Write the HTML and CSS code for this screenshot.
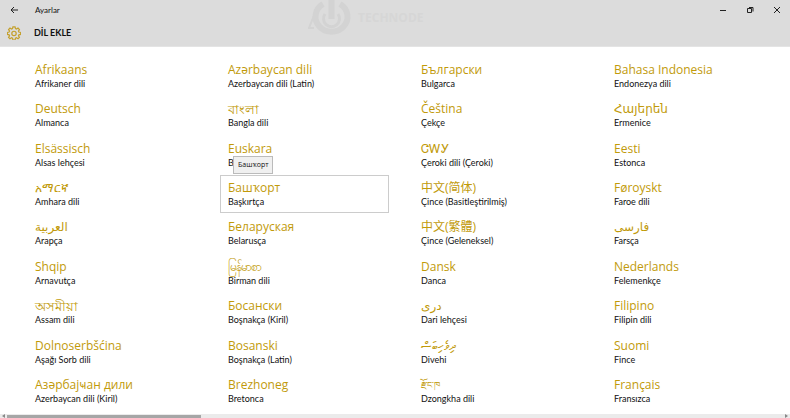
FILE: index.html
```html
<!DOCTYPE html>
<html lang="tr">
<head>
  <meta charset="UTF-8" />
  <meta name="viewport" content="width=device-width, initial-scale=1.0"/>
  <title>Ayarlar</title>
  <link rel="stylesheet" href="styles.css">
</head>
<body>
  <header class="header">
    <div class="titlebar">
      <button class="back" aria-label="Geri">
        <svg width="8" height="8" viewBox="0 0 8 8"><path d="M8 4H1M4 1L1 4l3 3"/></svg>
      </button>
      <span class="app-name">Ayarlar</span>
      <div class="window-buttons">
        <button aria-label="Simge durumuna küçült">
          <svg width="8" height="8" viewBox="0 0 8 8"><path d="M1 4.5h6"/></svg>
        </button>
        <button aria-label="Önceki boyut">
          <svg width="8" height="8" viewBox="0 0 8 8"><path d="M1.5 2.5h4v4h-4zM3 1.5h4v4"/></svg>
        </button>
        <button aria-label="Kapat">
          <svg width="8" height="8" viewBox="0 0 8 8"><path d="M1 1l6 6M7 1L1 7"/></svg>
        </button>
      </div>
    </div>
    <div class="page-title">
      <svg class="gear" width="14" height="14" viewBox="0 0 16 16">
        <path d="M6.800 1h2.400l.5 2 1.100.5 1.800-1.100 1.600 1.600-1.100 1.800.5 1.100 2 .5v2.200l-2 .5-.5 1.100 1.100 1.800-1.600 1.600-1.800-1.100-1.100.5-.5 2H6.800l-.5-2-1.100-.5-1.800 1.100L1.800 13l1.100-1.800-.5-1.100-2-.5V7.400l2-.5.5-1.100L1.800 4l1.600-1.600 1.800 1.100L6.300 3z"/>
        <circle cx="8" cy="8.500" r="2.500"/>
      </svg>
      <h1>DİL EKLE</h1>
    </div>
    <div class="watermark">
      <svg width="46" height="40" viewBox="0 0 46 40">
        <path d="M15 4a16 15 0 1 0 17 0" stroke-width="6"/>
        <path d="M17 14a8 8 0 1 0 13 0" stroke-width="3"/>
        <path d="M23.500 0v19" stroke-width="6"/>
        <path d="M7 13L1 28h5" stroke-width="2"/>
      </svg>
      <div class="watermark-text">TECHNODE</div>
    </div>
  </header>

  <main class="languages">
    <button class="language"><span class="name">Afrikaans</span><span class="local">Afrikaner dili</span></button>
    <button class="language"><span class="name">Deutsch</span><span class="local">Almanca</span></button>
    <button class="language"><span class="name">Elsässisch</span><span class="local">Alsas lehçesi</span></button>
    <button class="language"><span class="name">አማርኛ</span><span class="local">Amhara dili</span></button>
    <button class="language"><span class="name">العربية</span><span class="local">Arapça</span></button>
    <button class="language"><span class="name">Shqip</span><span class="local">Arnavutça</span></button>
    <button class="language"><span class="name bengali">অসমীয়া</span><span class="local">Assam dili</span></button>
    <button class="language"><span class="name">Dolnoserbšćina</span><span class="local">Aşağı Sorb dili</span></button>
    <button class="language"><span class="name">Азәрбајҹан дили</span><span class="local">Azerbaycan dili (Kiril)</span></button>

    <button class="language"><span class="name">Azərbaycan dili</span><span class="local">Azerbaycan dili (Latin)</span></button>
    <button class="language"><span class="name bengali">বাংলা</span><span class="local">Bangla dili</span></button>
    <button class="language"><span class="name">Euskara</span><span class="local">Baskça</span></button>
    <button class="language selected"><span class="name">Башҡорт</span><span class="local">Başkırtça</span><span class="tooltip">Башҡорт</span></button>
    <button class="language"><span class="name">Беларуская</span><span class="local">Belarusça</span></button>
    <button class="language"><span class="name">မြန်မာစာ</span><span class="local">Birman dili</span></button>
    <button class="language"><span class="name">Босански</span><span class="local">Boşnakça (Kiril)</span></button>
    <button class="language"><span class="name">Bosanski</span><span class="local">Boşnakça (Latin)</span></button>
    <button class="language"><span class="name">Brezhoneg</span><span class="local">Bretonca</span></button>

    <button class="language"><span class="name">Български</span><span class="local">Bulgarca</span></button>
    <button class="language"><span class="name">Čeština</span><span class="local">Çekçe</span></button>
    <button class="language"><span class="name">ᏣᎳᎩ</span><span class="local">Çeroki dili (Çeroki)</span></button>
    <button class="language"><span class="name">中文(简体)</span><span class="local">Çince (Basitleştirilmiş)</span></button>
    <button class="language"><span class="name">中文(繁體)</span><span class="local">Çince (Geleneksel)</span></button>
    <button class="language"><span class="name">Dansk</span><span class="local">Danca</span></button>
    <button class="language"><span class="name">درى</span><span class="local">Dari lehçesi</span></button>
    <button class="language"><span class="name">ދިވެހިބަސް</span><span class="local">Divehi</span></button>
    <button class="language"><span class="name tibetan">རྫོང་ཁ</span><span class="local">Dzongkha dili</span></button>

    <button class="language"><span class="name">Bahasa Indonesia</span><span class="local">Endonezya dili</span></button>
    <button class="language"><span class="name">Հայերեն</span><span class="local">Ermenice</span></button>
    <button class="language"><span class="name">Eesti</span><span class="local">Estonca</span></button>
    <button class="language"><span class="name">Føroyskt</span><span class="local">Faroe dili</span></button>
    <button class="language"><span class="name">فارسى</span><span class="local">Farsça</span></button>
    <button class="language"><span class="name">Nederlands</span><span class="local">Felemenkçe</span></button>
    <button class="language"><span class="name">Filipino</span><span class="local">Filipin dili</span></button>
    <button class="language"><span class="name">Suomi</span><span class="local">Fince</span></button>
    <button class="language"><span class="name">Français</span><span class="local">Fransızca</span></button>
  </main>

  <div class="scrollbar">
    <svg width="3" height="4" viewBox="0 0 3 4"><path d="M3 0L0 2l3 2z"/></svg>
    <div class="track"><div class="thumb"></div></div>
    <svg width="3" height="4" viewBox="0 0 3 4"><path d="M0 0l3 2-3 2z"/></svg>
  </div>
</body>
</html>
```

FILE: styles.css
```css
* {
  box-sizing: border-box;
}

body {
  margin: 0;
  min-height: 100vh;
  display: flex;
  flex-direction: column;
  font-family: 'Segoe UI', 'Open Sans', 'Noto Sans', 'Noto Sans CJK SC', 'DejaVu Sans', sans-serif;
  background: #fff;
  color: #111;
}

button {
  margin: 0;
  padding: 0;
  border: none;
  background: none;
  font: inherit;
  color: inherit;
}

svg {
  display: block;
  fill: none;
  stroke: #222;
}

.header {
  position: relative;
  background: #dcdcdc;
  border-bottom: 1px solid #e4e4e4;
}

.titlebar {
  display: flex;
  align-items: center;
  height: 19px;
  padding-left: 10px;
}

.app-name {
  margin-left: 17px;
  font-family: 'Segoe UI', Lato, sans-serif;
  font-size: 8px;
  line-height: 12px;
}

.window-buttons {
  display: flex;
  margin-left: auto;
}

.window-buttons button {
  width: 27px;
  height: 19px;
  display: flex;
  align-items: center;
  justify-content: center;
}

.page-title {
  display: flex;
  align-items: center;
  gap: 13px;
  height: 27px;
  padding-left: 7px;
}

.gear {
  stroke: #c4a02c;
  stroke-width: 1.4;
}

.page-title h1 {
  margin: 0;
  font-family: 'Segoe UI', Lato, sans-serif;
  font-size: 9px;
  line-height: 12px;
  font-weight: bold;
}

.watermark {
  position: absolute;
  top: 0;
  left: 39%;
  display: flex;
  gap: 4px;
}

.watermark svg {
  stroke: #d3d3d3;
}

.watermark-text {
  padding-top: 10px;
  font-size: 12px;
  line-height: 16px;
  font-weight: bold;
  color: #d6d6d6;
}

.languages {
  flex: 1;
  display: grid;
  grid-template-columns: repeat(4, 1fr);
  grid-template-rows: repeat(9, 1fr);
  grid-auto-flow: column;
  gap: 2px 24px;
  padding: 10px 15px 4px 27px;
}

.language {
  position: relative;
  display: flex;
  flex-direction: column;
  align-items: flex-start;
  justify-content: center;
  padding: 3px 7px;
  border: 1px solid transparent;
  text-align: left;
  white-space: nowrap;
}

.language:hover,
.language.selected {
  border-color: #ccc;
}

.name {
  height: 16px;
  font-size: 12px;
  line-height: 16px;
  color: #c19a0a;
}

.name.bengali {
  font-size: 13px;
}

.name.tibetan {
  font-size: 9px;
}

.local {
  font-family: 'Segoe UI', Lato, sans-serif;
  font-size: 9px;
  line-height: 12px;
}

.tooltip {
  position: absolute;
  left: 12px;
  bottom: 100%;
  margin-bottom: 2px;
  padding: 2px 4px;
  border: 1px solid #bbb;
  background: #f0f0f0;
  font-size: 7px;
  line-height: 12px;
}

.scrollbar {
  display: flex;
  gap: 2px;
  height: 4px;
  padding: 0 2px;
  background: #ebebeb;
}

.scrollbar svg {
  fill: #888;
  stroke: none;
}

.track {
  flex: 1;
}

.thumb {
  width: 25%;
  height: 3px;
  margin-top: 1px;
  background: #a6a6a6;
}
```
